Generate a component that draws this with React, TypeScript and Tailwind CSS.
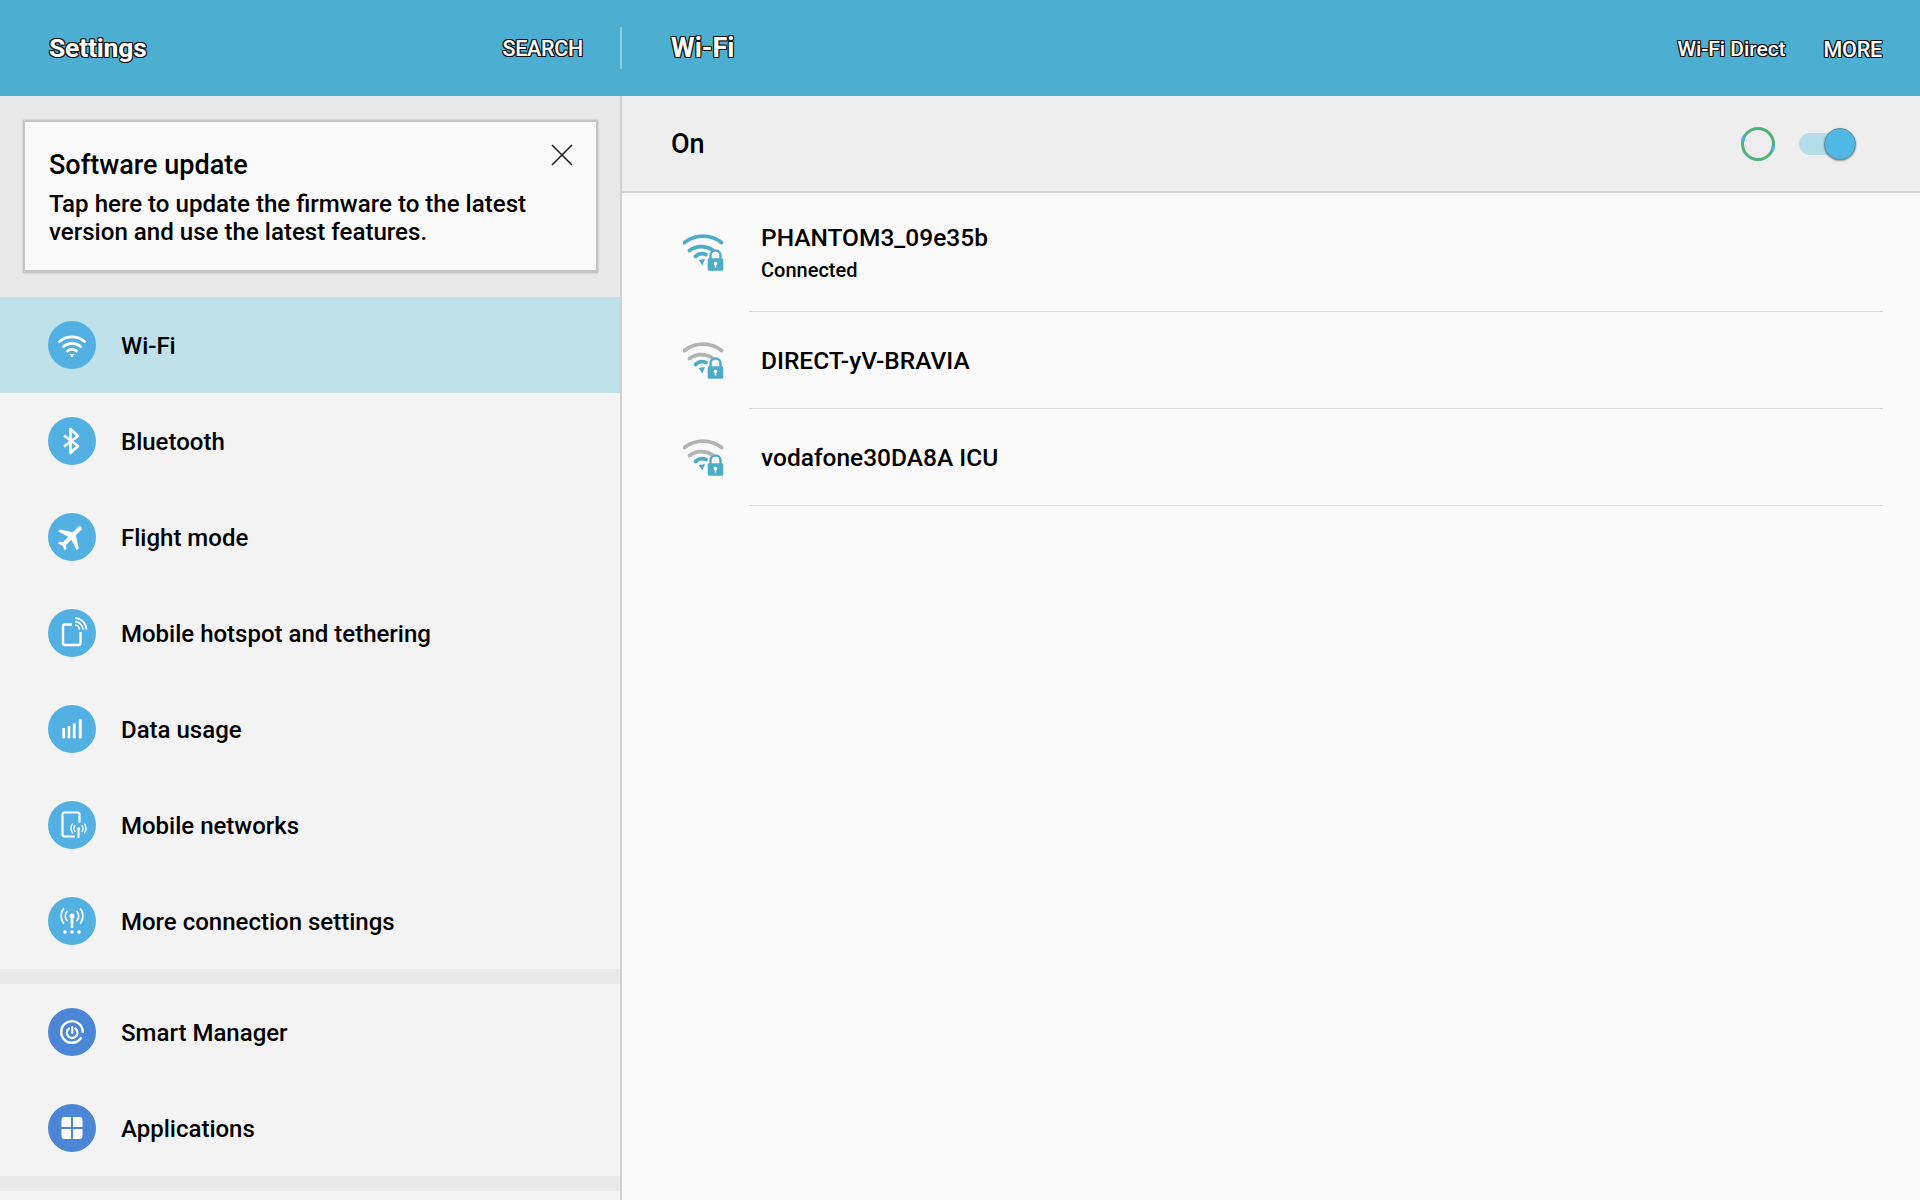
import type { ReactNode } from 'react';

const outline =
  'text-white [text-shadow:-1px_-1px_0_#111,1px_-1px_0_#111,-1px_1px_0_#111,1px_1px_0_#111,0_-1px_0_#111,0_1px_0_#111,-1px_0_0_#111,1px_0_0_#111]';

function IconWifi() {
  return (
    <svg viewBox="0 0 48 48" className="w-12 h-12" fill="none" stroke="#fff" strokeLinecap="round">
      <path d="M11.500 20.500a19 19 0 0 1 25 0" strokeWidth="2.800" />
      <path d="M15.500 25.500a13 13 0 0 1 17 0" strokeWidth="2.800" />
      <path d="M19.500 30a7 7 0 0 1 9 0" strokeWidth="2.800" />
      <path d="M21.500 33h5L24 36.500z" fill="#fff" stroke="none" />
    </svg>
  );
}

function IconBluetooth() {
  return (
    <svg viewBox="0 0 48 48" className="w-12 h-12" fill="none" stroke="#fff" strokeWidth="2.600" strokeLinejoin="round">
      <path d="M16 18.500 30 29l-7.500 7V12l7.500 7-14 10.500" />
    </svg>
  );
}

function IconFlight() {
  return (
    <svg viewBox="0 0 48 48" className="w-12 h-12">
      <g transform="translate(7 7.500) scale(1.400) rotate(45 12 12)">
        <path
          fill="#fff"
          d="M21 16v-2l-8-5V3.500c0-.83-.67-1.500-1.500-1.500S10 2.670 10 3.500V9l-8 5v2l8-2.500V19l-2 1.500V22l3.500-1 3.500 1v-1.500L13 19v-5.500l8 2.500z"
        />
      </g>
    </svg>
  );
}

function IconHotspot() {
  return (
    <svg viewBox="0 0 48 48" className="w-12 h-12" fill="none" stroke="#fff">
      <path d="M24 15.500h-7a2 2 0 0 0-2 2V34a2 2 0 0 0 2 2h13.500a2 2 0 0 0 2-2V23" strokeWidth="2.400" />
      <path d="M27 9a12 12 0 0 1 11.500 11.500" strokeWidth="1.700" />
      <path d="M27 12.500a8.500 8.500 0 0 1 8 8" strokeWidth="1.700" />
      <path d="M27 16a5 5 0 0 1 4.500 4.500" strokeWidth="1.700" />
    </svg>
  );
}

function IconData() {
  return (
    <svg viewBox="0 0 48 48" className="w-12 h-12" fill="#fff">
      <rect x="14.300" y="23" width="2.800" height="10.300" />
      <rect x="19.700" y="21" width="2.600" height="12.300" />
      <rect x="24.800" y="18.500" width="2.800" height="14.800" />
      <rect x="30.800" y="14.300" width="2.900" height="19" />
    </svg>
  );
}

function IconNetworks() {
  return (
    <svg viewBox="0 0 48 48" className="w-12 h-12" fill="none" stroke="#fff" strokeLinecap="round">
      <path d="M26 35.500H16.500a2 2 0 0 1-2-2V13.500a2 2 0 0 1 2-2h13a2 2 0 0 1 2 2V21" strokeWidth="2.200" />
      <circle cx="30.500" cy="27.500" r="1.500" fill="#fff" stroke="none" />
      <path d="M30.500 28v8" strokeWidth="2" />
      <path d="M27 24.500a5 5 0 0 0 0 6M34 24.500a5 5 0 0 1 0 6" strokeWidth="1.300" />
      <path d="M24.500 23a8 8 0 0 0 0 9M36.500 23a8 8 0 0 1 0 9" strokeWidth="1.300" />
    </svg>
  );
}

function IconMore() {
  return (
    <svg viewBox="0 0 48 48" className="w-12 h-12" fill="none" stroke="#fff" strokeLinecap="round">
      <circle cx="24" cy="19" r="2.500" fill="#fff" stroke="none" />
      <path d="M24 20v10" strokeWidth="2.600" />
      <path d="M19 14.500a7 7 0 0 0 0 9M29 14.500a7 7 0 0 1 0 9" strokeWidth="1.800" />
      <path d="M15.500 12a11.500 11.500 0 0 0 0 14M32.500 12a11.500 11.500 0 0 1 0 14" strokeWidth="1.800" />
      <circle cx="17" cy="35" r="1.800" fill="#fff" stroke="none" />
      <circle cx="24" cy="35" r="1.800" fill="#fff" stroke="none" />
      <circle cx="31" cy="35" r="1.800" fill="#fff" stroke="none" />
    </svg>
  );
}

function IconSmart() {
  return (
    <svg viewBox="0 0 48 48" className="w-12 h-12" fill="none" stroke="#fff" strokeLinecap="round">
      <path d="M33.350 29.400A10.800 10.800 0 1 1 34.760 24.940" strokeWidth="2.400" strokeLinecap="butt" />
      <path d="M21 20.500a5.300 5.300 0 1 0 6.300 0" strokeWidth="2.200" />
      <path d="M24.200 19v6" strokeWidth="2.200" />
    </svg>
  );
}

function IconApps() {
  return (
    <svg viewBox="0 0 48 48" className="w-12 h-12" fill="#fff">
      <path d="M13.500 16a3 3 0 0 1 3-3H23v10H13.500z" />
      <path d="M25 13h6.500a3 3 0 0 1 3 3v7H25z" />
      <path d="M13.500 25H23v10h-6.500a3 3 0 0 1-3-3z" />
      <path d="M25 25h9.500v7a3 3 0 0 1-3 3H25z" />
    </svg>
  );
}

// outer two arcs take the signal colour, the inner arc and wedge stay teal
function WifiLock({ color }: { color: string }) {
  return (
    <svg viewBox="0 0 42 40" className="w-[42px] h-10 shrink-0" fill="none">
      <g stroke={color} strokeWidth="3.800" strokeLinecap="round">
        <path d="M1.500 9.500a30 30 0 0 1 37 0" />
        <path d="M6.500 17.500a20 20 0 0 1 23 -.5" />
      </g>
      <path d="M12.500 23.500a10 10 0 0 1 10.500 -2" stroke="#4facc9" strokeWidth="3.800" strokeLinecap="round" />
      <path d="M15.500 27l6.500-1-2.500 6.500z" fill="#4facc9" />
      <path d="M27.500 26v-3.500a5 5 0 0 1 10 0V26" stroke="#4facc9" strokeWidth="2.400" />
      <rect x="24.700" y="25.300" width="15.600" height="12.400" rx="1.500" fill="#4facc9" />
      <circle cx="32.500" cy="30.500" r="1.700" fill="#fff" />
      <path d="M32.500 31v3.500" stroke="#fff" strokeWidth="1.400" />
    </svg>
  );
}

interface MenuItem {
  label: string;
  icon: ReactNode;
  active?: boolean;
}

function MenuRow({ label, icon, active }: MenuItem) {
  return (
    <div className={`h-24 flex items-center pl-12 ${active ? 'bg-[#bee1ea]' : ''}`}>
      <div className="w-12 h-12 rounded-full bg-[#53b0e2] shrink-0">{icon}</div>
      <span className="ml-[25px] mt-[2px] text-[24px] font-medium text-black">{label}</span>
    </div>
  );
}

function MenuRowDark({ label, icon }: MenuItem) {
  return (
    <div className="h-24 flex items-center pl-12">
      <div className="w-12 h-12 rounded-full bg-[#4b87d6] shrink-0">{icon}</div>
      <span className="ml-[25px] mt-[2px] text-[24px] font-medium text-black">{label}</span>
    </div>
  );
}

const connections: MenuItem[] = [
  { label: 'Wi-Fi', icon: <IconWifi />, active: true },
  { label: 'Bluetooth', icon: <IconBluetooth /> },
  { label: 'Flight mode', icon: <IconFlight /> },
  { label: 'Mobile hotspot and tethering', icon: <IconHotspot /> },
  { label: 'Data usage', icon: <IconData /> },
  { label: 'Mobile networks', icon: <IconNetworks /> },
  { label: 'More connection settings', icon: <IconMore /> },
];

const device: MenuItem[] = [
  { label: 'Smart Manager', icon: <IconSmart /> },
  { label: 'Applications', icon: <IconApps /> },
];

export default function App() {
  return (
    <div className="w-[1920px] h-[1200px] overflow-hidden flex flex-col bg-[#fafafa] font-['Roboto',sans-serif]">
      {/* header */}
      <header className="h-24 shrink-0 flex bg-[#4caed0]">
        <div className="w-[622px] shrink-0 flex items-center justify-between pl-[49px] pr-[39px] relative">
          <span className={`text-[26.500px] font-bold -tracking-[0.2px] ${outline}`}>Settings</span>
          <span className={`mt-[3px] text-[21.500px] font-medium -tracking-[0.3px] ${outline}`}>SEARCH</span>
          <div className="absolute right-0 top-[27px] w-0.5 h-[42px] bg-[#8fcde2]" />
        </div>
        <div className="flex-1 flex items-center pl-[49px] pr-[38px]">
          <span className={`text-[27px] font-bold ${outline}`}>Wi-Fi</span>
          <span className={`ml-auto mt-[4px] text-[21px] font-medium -tracking-[0.05px] ${outline}`}>Wi-Fi Direct</span>
          <span className={`ml-[38px] mt-[5px] text-[21.500px] font-medium -tracking-[0.2px] ${outline}`}>MORE</span>
        </div>
      </header>

      <div className="flex-1 flex min-h-0">
        {/* left panel */}
        <aside className="w-[622px] shrink-0 flex flex-col bg-[#e9e9e9] border-r-2 border-[#d0d0d0]">
          <div className="h-[201px] shrink-0 pt-6 px-[23px]">
            <div className="relative h-[153px] w-[575px] bg-[#fafafa] border-2 border-b-[3px] border-[#c4c4c4] pl-6 pt-[27px] shadow-[0_0_2px_rgba(0,0,0,0.2)]">
              <div className="text-[27px] leading-[32px] font-medium text-black">Software update</div>
              <div className="mt-[9px] text-[24.100px] leading-[28px] font-medium text-black">
                Tap here to update the firmware to the latest
                <br />
                version and use the latest features.
              </div>
              <svg viewBox="0 0 22 22" className="absolute right-[23px] top-[22px] w-[22px] h-[22px]" fill="none" stroke="#222" strokeWidth="1.600">
                <path d="M1 1l20 20M21 1 1 21" />
              </svg>
            </div>
          </div>
          <div className="bg-[#f3f3f3]">
            {connections.map((item) => (
              <MenuRow key={item.label} {...item} />
            ))}
          </div>
          <div className="h-[15px] shrink-0" />
          <div className="bg-[#f3f3f3]">
            {device.map((item) => (
              <MenuRowDark key={item.label} {...item} />
            ))}
          </div>
          <div className="h-[15px] shrink-0" />
          <div className="flex-1 bg-[#f3f3f3]" />
        </aside>

        {/* right panel */}
        <main className="flex-1 flex flex-col">
          <div className="h-[97px] shrink-0 flex items-center bg-[#eeeeee] border-b-2 border-[#d4d4d4] pl-[49px]">
            <span className="mt-[1px] text-[27px] font-medium text-black">On</span>
            <svg viewBox="0 0 36 36" className="ml-auto w-9 h-9">
              <circle cx="18" cy="18" r="15.500" fill="none" stroke="#4fb27a" strokeWidth="3" />
              <path d="M2.700 15a15.500 15.500 0 0 1 1.100 -4" fill="none" stroke="#4fb4e8" strokeWidth="3.400" />
              <path d="M33.300 20a15.500 15.500 0 0 1-1.100 4.500" fill="none" stroke="#4fb4e8" strokeWidth="3.400" />
            </svg>
            <div className="relative ml-[23px] mr-[65px] w-[56px] h-[22px] rounded-full bg-[#b4dde8]">
              <div className="absolute -right-[1px] -top-[5px] w-8 h-8 rounded-full bg-[#4fb9e3] border border-[#5d8ea3] shadow-[0_1px_2px_rgba(0,0,0,0.4)]" />
            </div>
          </div>
          <div className="flex flex-col">
            <NetworkRow name="PHANTOM3_09e35b" status="Connected" color="#4facc9" />
            <NetworkRow name="DIRECT-yV-BRAVIA" color="#b3b3b3" />
            <NetworkRow name="vodafone30DA8A ICU" color="#b3b3b3" />
          </div>
        </main>
      </div>
    </div>
  );
}

function NetworkRow({ name, status, color }: { name: string; status?: string; color: string }) {
  return (
    <div className={`flex items-center pl-[61px] ${status ? 'h-[119px]' : 'h-[97px]'}`}>
      <WifiLock color={color} />
      <div className={`ml-[24px] mr-[37px] self-stretch flex-1 flex flex-col justify-center border-b border-[#d9d9d9] pl-3 ${status ? '' : 'pt-[1px]'}`}>
        <div className="text-[24.500px] leading-[34px] font-medium text-black">{name}</div>
        {status && <div className="mt-[1px] text-[20px] leading-[28px] font-medium text-black">{status}</div>}
      </div>
    </div>
  );
}
